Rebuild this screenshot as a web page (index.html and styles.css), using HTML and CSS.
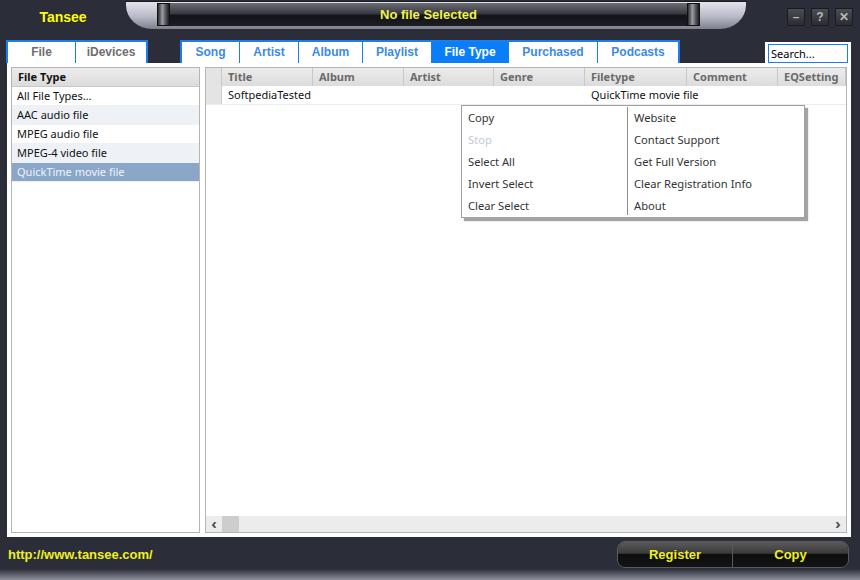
FILE: index.html
```html
<!DOCTYPE html>
<html lang="en">
<head>
    <meta charset="UTF-8">
    <title>Tansee</title>
    <link rel="stylesheet" href="styles.css">
</head>
<body>

<div class="app">
    <div class="titlebar">
        <div class="brand">Tansee</div>
        <div class="strip">
            <div class="display">
                <span class="cap"></span>
                <span class="display-text">No file Selected</span>
                <span class="cap"></span>
            </div>
        </div>
        <div class="winbtns">
            <span class="winbtn">&#8211;</span>
            <span class="winbtn">?</span>
            <span class="winbtn">&#10005;</span>
        </div>
    </div>

    <div class="tabrow">
        <div class="tabs source">
            <span class="tab gray w-file">File</span>
            <span class="tab gray w-idev">iDevices</span>
        </div>
        <div class="tabs views">
            <span class="tab w-song">Song</span>
            <span class="tab w-artist">Artist</span>
            <span class="tab w-album">Album</span>
            <span class="tab w-playlist">Playlist</span>
            <span class="tab active w-ftype">File Type</span>
            <span class="tab w-purch">Purchased</span>
            <span class="tab w-pod">Podcasts</span>
        </div>
        <div class="search">
            <input type="text" value="Search...">
        </div>
    </div>

    <div class="main">
        <div class="typelist">
            <div class="list-head">File Type</div>
            <div class="list-item">All File Types…</div>
            <div class="list-item alt">AAC audio file</div>
            <div class="list-item">MPEG audio file</div>
            <div class="list-item alt">MPEG-4 video file</div>
            <div class="list-item selected">QuickTime movie file</div>
        </div>

        <div class="tracks">
            <div class="grid head">
                <span class="rowhead"></span>
                <span>Title</span>
                <span>Album</span>
                <span>Artist</span>
                <span>Genre</span>
                <span>Filetype</span>
                <span>Comment</span>
                <span>EQSetting</span>
            </div>
            <div class="grid row">
                <span class="rowhead"></span>
                <span>SoftpediaTested</span>
                <span></span>
                <span></span>
                <span></span>
                <span class="spill">QuickTime movie file</span>
                <span></span>
                <span></span>
            </div>
            <div class="spacer"></div>
            <div class="hscroll">
                <span class="arrow">&#8249;</span>
                <span class="thumb"></span>
                <span class="track"></span>
                <span class="arrow">&#8250;</span>
            </div>

            <div class="menu">
                <div class="menu-col">
                    <div class="menu-item">Copy</div>
                    <div class="menu-item disabled">Stop</div>
                    <div class="menu-item">Select All</div>
                    <div class="menu-item">Invert Select</div>
                    <div class="menu-item">Clear Select</div>
                </div>
                <div class="menu-col right">
                    <div class="menu-item">Website</div>
                    <div class="menu-item">Contact Support</div>
                    <div class="menu-item">Get Full Version</div>
                    <div class="menu-item">Clear Registration Info</div>
                    <div class="menu-item">About</div>
                </div>
            </div>
        </div>
    </div>

    <div class="footer">
        <div class="footer-bar">
            <span class="url">http://www.tansee.com/</span>
            <div class="actions">
                <button class="action">Register</button>
                <button class="action">Copy</button>
            </div>
        </div>
        <div class="footer-edge"></div>
    </div>
</div>

</body>
</html>
```

FILE: styles.css
```css
body {
    margin: 0;
    background-color: #2b2e39;
    font-family: "Liberation Sans", Arial, sans-serif;
}

.app {
    width: 860px;
    height: 580px;
    display: flex;
    flex-direction: column;
    background-color: #2b2e39;
    overflow: hidden;
}

/* title band */
.titlebar {
    height: 40px;
    display: flex;
    align-items: flex-start;
}

.brand {
    width: 126px;
    padding-top: 9px;
    text-align: center;
    color: #ffff00;
    font-weight: bold;
    font-size: 14px;
}

.strip {
    width: 620px;
    height: 28px;
    margin-top: 1px;
    padding: 1px 0 0 31px;
    box-sizing: border-box;
    background: linear-gradient(#e4e4ec, #b8b9c6 55%, #7d7f8c);
    border-radius: 0 0 26px 26px / 0 0 24px 24px;
    border-top: 1px solid #1a1b22;
}

.display {
    width: 543px;
    height: 23px;
    display: flex;
    align-items: stretch;
    background: linear-gradient(#6b6c74, #3a3b42 45%, #121318 55%, #1d1e24);
}

.cap {
    width: 11px;
    background: linear-gradient(90deg, #2a2b30, #9a9ba3 40%, #55565d 70%, #1e1f24);
    border: 1px solid #111;
}

.display-text {
    flex: 1;
    text-align: center;
    color: #f2f24a;
    font-weight: bold;
    font-size: 13px;
    line-height: 23px;
}

.winbtns {
    margin-left: auto;
    margin-right: 7px;
    margin-top: 8px;
    display: flex;
    gap: 6px;
}

.winbtn {
    width: 18px;
    height: 18px;
    background: linear-gradient(#4b4d55, #2b2c33);
    border: 1px solid #1a1a1f;
    box-sizing: border-box;
    color: #b8b8b8;
    font-size: 12px;
    font-weight: bold;
    text-align: center;
    line-height: 16px;
}

/* tabs */
.tabrow {
    height: 23px;
    display: flex;
    align-items: flex-end;
}

.tabs {
    display: flex;
    height: 23px;
    border: 2px solid #1a7ef2;
    border-bottom: none;
    box-sizing: border-box;
    background-color: #ffffff;
}

.source {
    margin-left: 6px;
}

.views {
    margin-left: 32px;
}

.tab {
    font-size: 12px;
    font-weight: bold;
    color: #3b8ae6;
    text-align: center;
    line-height: 21px;
    border-right: 1px solid #1a7ef2;
}

.tab:last-child {
    border-right: none;
}

.tab.gray {
    color: #6e6e6e;
}

.tab.active {
    background-color: #0a7ef8;
    color: #ffffff;
}

.w-file { width: 67px; }
.w-idev { width: 70px; }
.w-song { width: 57px; }
.w-artist { width: 58px; }
.w-album { width: 63px; }
.w-playlist { width: 68px; }
.w-ftype { width: 76px; }
.w-purch { width: 88px; }
.w-pod { width: 80px; }

.search {
    margin-left: auto;
    margin-right: 9px;
    width: 86px;
    height: 21px;
    padding: 2px 2px 0 3px;
    box-sizing: border-box;
    background-color: #ffffff;
}

.search input {
    width: 80px;
    height: 19px;
    box-sizing: border-box;
    border: 1px solid #1a7ef2;
    padding: 0 2px;
    margin: 0;
    font-family: "Noto Sans", sans-serif;
    font-size: 11px;
    color: #000;
    outline: none;
}

/* main area */
.main {
    height: 474px;
    margin: 0 9px 0 7px;
    padding: 4px;
    box-sizing: border-box;
    background-color: #ffffff;
    display: flex;
    gap: 5px;
    font-family: "Noto Sans", "Open Sans", sans-serif;
    font-size: 11px;
}

.typelist {
    width: 189px;
    border: 1px solid #b5b5b5;
    box-sizing: border-box;
}

.list-head {
    height: 18px;
    line-height: 18px;
    padding-left: 6px;
    font-weight: bold;
    color: #111;
    background: linear-gradient(#ececec, #dcdcdc);
    border-bottom: 1px solid #c8c8c8;
}

.list-item {
    height: 19px;
    line-height: 18px;
    padding-left: 5px;
    color: #111;
    border-bottom: 1px solid #f0f0f0;
    box-sizing: border-box;
}

.list-item.alt {
    background-color: #eef2f6;
}

.list-item.selected {
    background-color: #8aa6c9;
    color: #f0f4fa;
}

.tracks {
    flex: 1;
    position: relative;
    border: 1px solid #b5b5b5;
    box-sizing: border-box;
    display: flex;
    flex-direction: column;
}

.grid {
    display: grid;
    grid-template-columns: 16px 91px 91px 90px 91px 102px 91px 1fr;
    height: 18px;
    line-height: 18px;
}

.grid span {
    padding-left: 6px;
    white-space: nowrap;
    overflow: hidden;
}

.grid span.spill {
    overflow: visible;
}

.grid.head {
    background: linear-gradient(#ececec, #dcdcdc);
    color: #6a6a6a;
    font-weight: bold;
}

.grid.head span {
    border-right: 1px solid #c8c8c8;
}

.grid.row {
    color: #111;
    border-bottom: 1px solid #ececec;
}

.grid .rowhead {
    background-color: #e4e4e4;
    border-right: 1px solid #cfcfcf;
    padding: 0;
}

.spacer {
    flex: 1;
}

.hscroll {
    height: 16px;
    display: flex;
    background-color: #ececec;
}

.hscroll .arrow {
    width: 16px;
    text-align: center;
    font-size: 15px;
    line-height: 14px;
    font-weight: bold;
    color: #505050;
}

.hscroll .thumb {
    width: 17px;
    background-color: #cdcdcd;
}

.hscroll .track {
    flex: 1;
}

/* context menu */
.menu {
    position: absolute;
    left: 255px;
    top: 37px;
    width: 344px;
    height: 113px;
    box-sizing: border-box;
    padding: 1px 0 2px;
    display: flex;
    background-color: #ffffff;
    border: 1px solid #a0a0a0;
    box-shadow: 3px 3px 1px rgba(90, 90, 90, 0.55);
    font-size: 11.2px;
    color: #333;
}

.menu-col {
    width: 165px;
    padding-left: 6px;
    box-sizing: border-box;
}

.menu-col.right {
    flex: 1;
    border-left: 1px solid #8c8c8c;
}

.menu-item {
    height: 22px;
    line-height: 22px;
}

.menu-item.disabled {
    color: #c2cad8;
}

/* footer */
.footer {
    flex: 1;
    display: flex;
    flex-direction: column;
}

.footer-bar {
    flex: 1;
    display: flex;
    align-items: flex-start;
    padding: 4px 11px 0 8px;
}

.url {
    color: #f0f020;
    font-weight: bold;
    font-size: 13px;
    margin-top: 6px;
}

.actions {
    margin-left: auto;
    display: flex;
    border: 1px solid #5a5a5a;
    border-radius: 8px;
    overflow: hidden;
}

.action {
    height: 25px;
    padding: 0;
    border: none;
    background: linear-gradient(#5a5a5a, #3a3a3a 45%, #0e0e0e 50%, #141414);
    color: #f0f020;
    font-family: "Liberation Sans", Arial, sans-serif;
    font-weight: bold;
    font-size: 13px;
}

.action:first-child {
    width: 115px;
    border-right: 1px solid #5a5a5a;
}

.action:last-child {
    width: 115px;
}

.footer-edge {
    height: 11px;
    background: linear-gradient(#2b2e39, #8e909a);
}
```
